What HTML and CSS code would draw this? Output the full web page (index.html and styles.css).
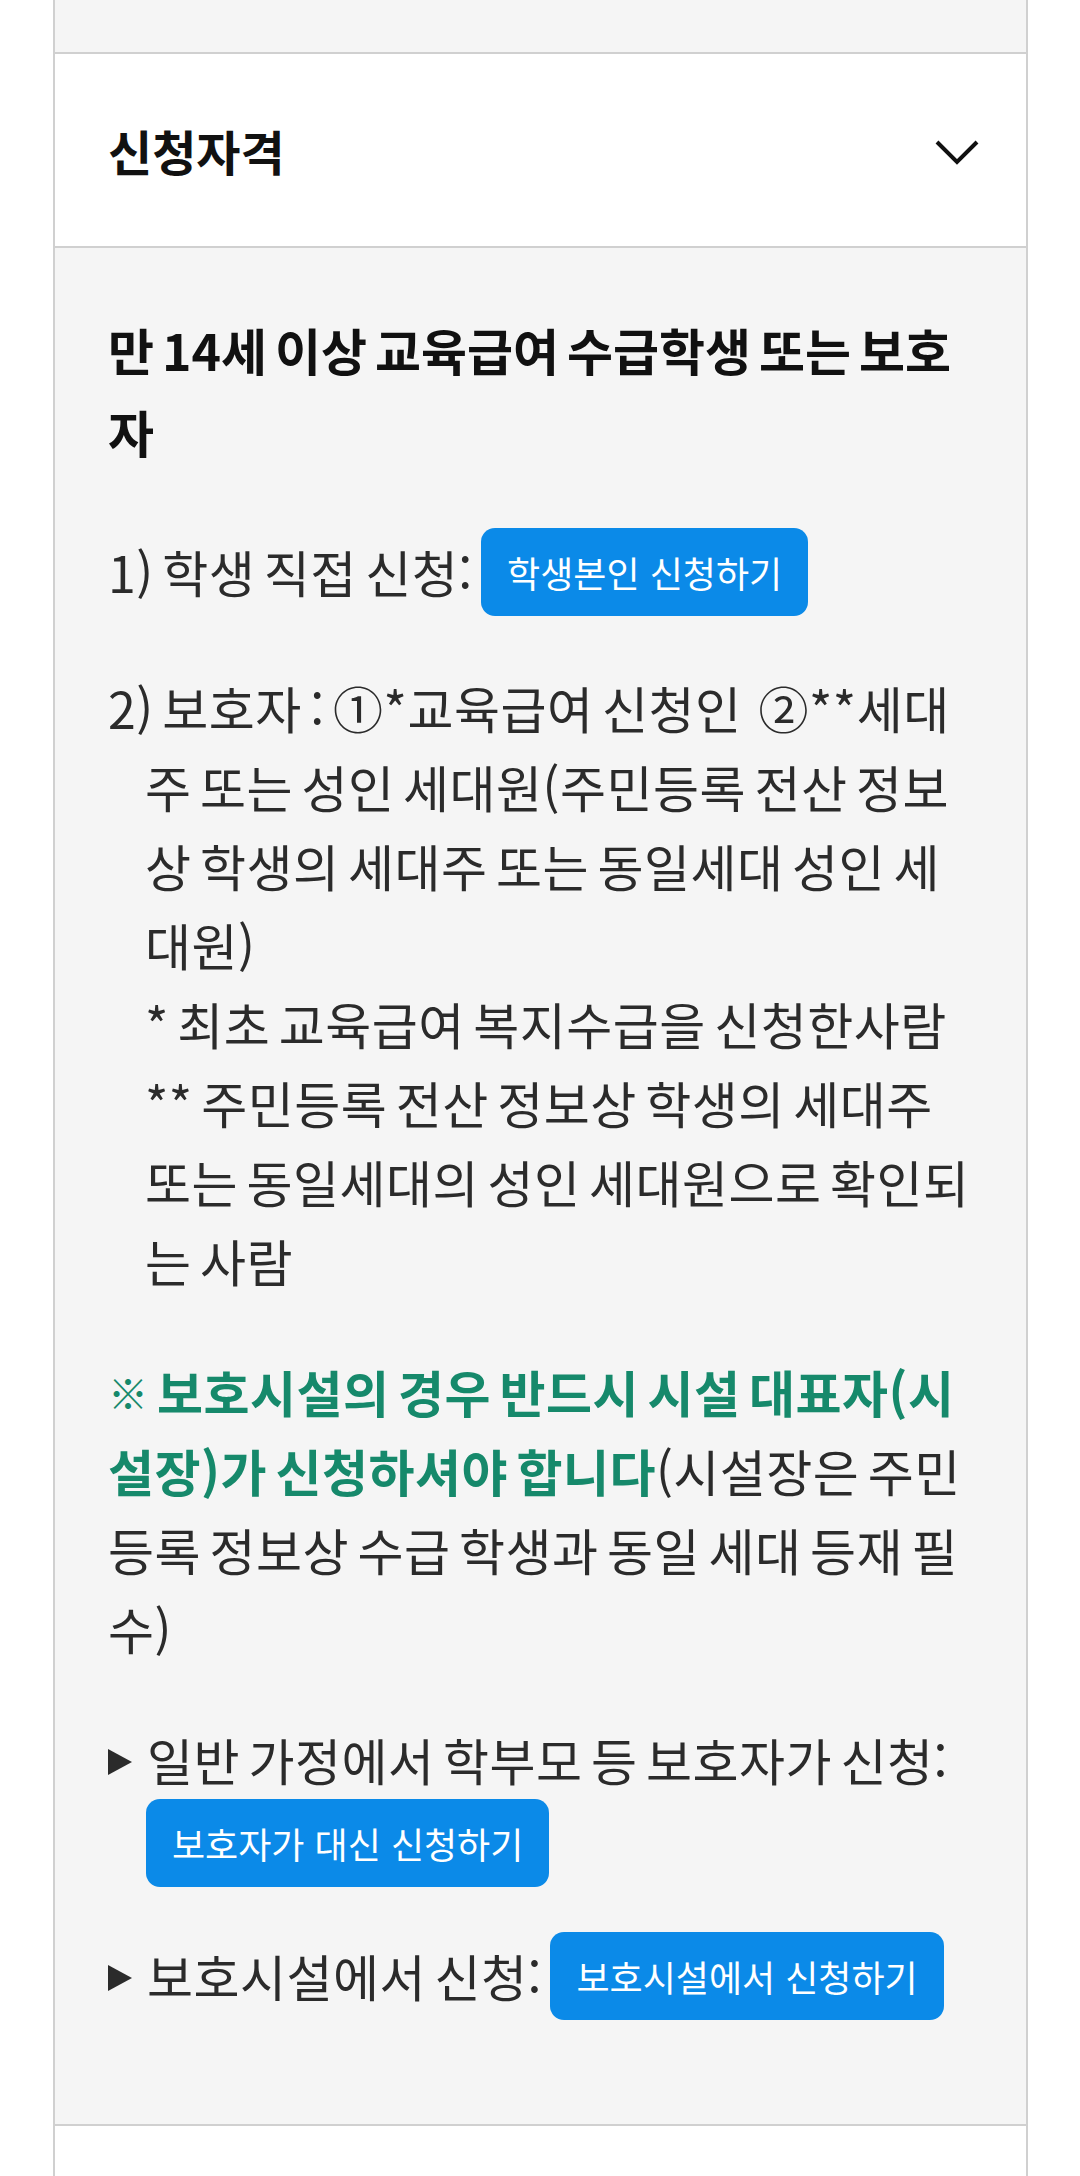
FILE: index.html
```html
<!DOCTYPE html>
<html lang="ko">
<head>
    <meta charset="UTF-8">
    <meta name="viewport" content="width=device-width, initial-scale=1.0">
    <title>교육급여 신청 안내</title>
    <link rel="stylesheet" href="styles.css">
</head>
<body>

<div class="screen">
    <div class="accordion">
        <!-- end of the previous item, scrolled mostly out of view -->
        <div class="acc-panel acc-panel-tail"></div>

        <section class="acc-item is-open">
            <div class="acc-head">
                <h2 class="acc-title">신청자격</h2>
                <svg class="chevron" width="44" height="26" viewBox="0 0 44 26" aria-hidden="true">
                    <polyline points="2,2 22,22 42,2" />
                </svg>
            </div>
            <div class="acc-panel">
                <h3 class="panel-title">만 14세 이상 교육급여 수급학생 또는 보호자</h3>

                <p>1) 학생 직접 신청: <a class="btn-apply" href="#">학생본인 신청하기</a></p>

                <p class="hang">2) 보호자 : ①*교육급여 신청인&nbsp; ②**세대주 또는 성인 세대원(주민등록 전산 정보상 학생의 세대주 또는 동일세대 성인 세대원)<br>* 최초 교육급여 복지수급을 신청한사람<br>** 주민등록 전산 정보상 학생의 세대주 또는 동일세대의 성인 세대원으로 확인되는 사람</p>

                <p><strong class="notice"><span class="mark">※</span> 보호시설의 경우 반드시 시설 대표자(시설장)가 신청하셔야 합니다</strong>(시설장은 주민등록 정보상 수급 학생과 동일 세대 등재 필수)</p>

                <ul class="apply-list">
                    <li>일반 가정에서 학부모 등 보호자가 신청: <a class="btn-apply" href="#">보호자가 대신 신청하기</a></li>
                    <li>보호시설에서 신청: <a class="btn-apply" href="#">보호시설에서 신청하기</a></li>
                </ul>
            </div>
        </section>

        <section class="acc-item">
            <div class="acc-head">
                <svg class="chevron" width="44" height="26" viewBox="0 0 44 26" aria-hidden="true">
                    <polyline points="2,2 22,22 42,2" />
                </svg>
            </div>
        </section>
    </div>
</div>

</body>
</html>
```

FILE: styles.css
```css
body {
    margin: 0;
    padding: 0;
    background-color: #fff;
    font-family: "Noto Sans CJK KR", sans-serif;
    color: #2b2b2b;
}

.screen {
    height: 100vh;
    overflow: hidden;
}

.accordion {
    margin: 0 52px 0 53px;
    border-left: 2px solid #d0d0d0;
    border-right: 2px solid #d0d0d0;
}

.acc-item {
    border-top: 2px solid #d0d0d0;
}

.acc-head {
    display: flex;
    align-items: center;
    justify-content: space-between;
    height: 192px;
    padding: 0 47px 0 53px;
    background-color: #fff;
}
.acc-title {
    margin: 0;
    font-size: 48px;
    font-weight: 700;
    color: #111;
}
.chevron {
    display: block;
    margin-top: 6px;
    margin-left: auto;
}
.chevron polyline {
    fill: none;
    stroke: #111;
    stroke-width: 4;
}

.acc-panel {
    border-top: 2px solid #d0d0d0;
    padding: 60px 50px 104px 53px;
    background-color: #f5f5f5;
    font-size: 50px;
    line-height: 1.58;
    letter-spacing: 0.5px;
    word-spacing: -6px;
}
.acc-panel-tail {
    height: 52px;
    padding: 0;
    border-top: 0;
}

.panel-title {
    margin: 0 0 56px;
    font-size: 50px;
    font-weight: 700;
    line-height: 82px;
    letter-spacing: 0;
    color: #111;
}

.acc-panel p {
    margin: 0 0 52px;
}
.hang {
    padding-left: 37px;
    text-indent: -37px;
}

.notice {
    font-weight: 700;
    color: #16896b;
}
.notice .mark {
    font-size: 40px;
    vertical-align: 4px;
}

.btn-apply {
    display: inline-block;
    height: 88px;
    padding: 0 26px;
    border-radius: 14px;
    background-color: #0b8ae8;
    color: #fff;
    font-size: 36px;
    line-height: 88px;
    letter-spacing: 0;
    word-spacing: 0;
    text-indent: 0;
    text-decoration: none;
    vertical-align: 5px;
}

.apply-list {
    margin: 0;
    padding: 0;
    list-style: none;
}
.apply-list li {
    padding-left: 38px;
    text-indent: -38px;
}
.apply-list li + li {
    margin-top: 45px;
}
/* small filled arrow in front of each item */
.apply-list li::before {
    content: "";
    display: inline-block;
    margin-right: 15px;
    border-left: 24px solid #2b2b2b;
    border-top: 13px solid transparent;
    border-bottom: 13px solid transparent;
    vertical-align: 6px;
}
```
